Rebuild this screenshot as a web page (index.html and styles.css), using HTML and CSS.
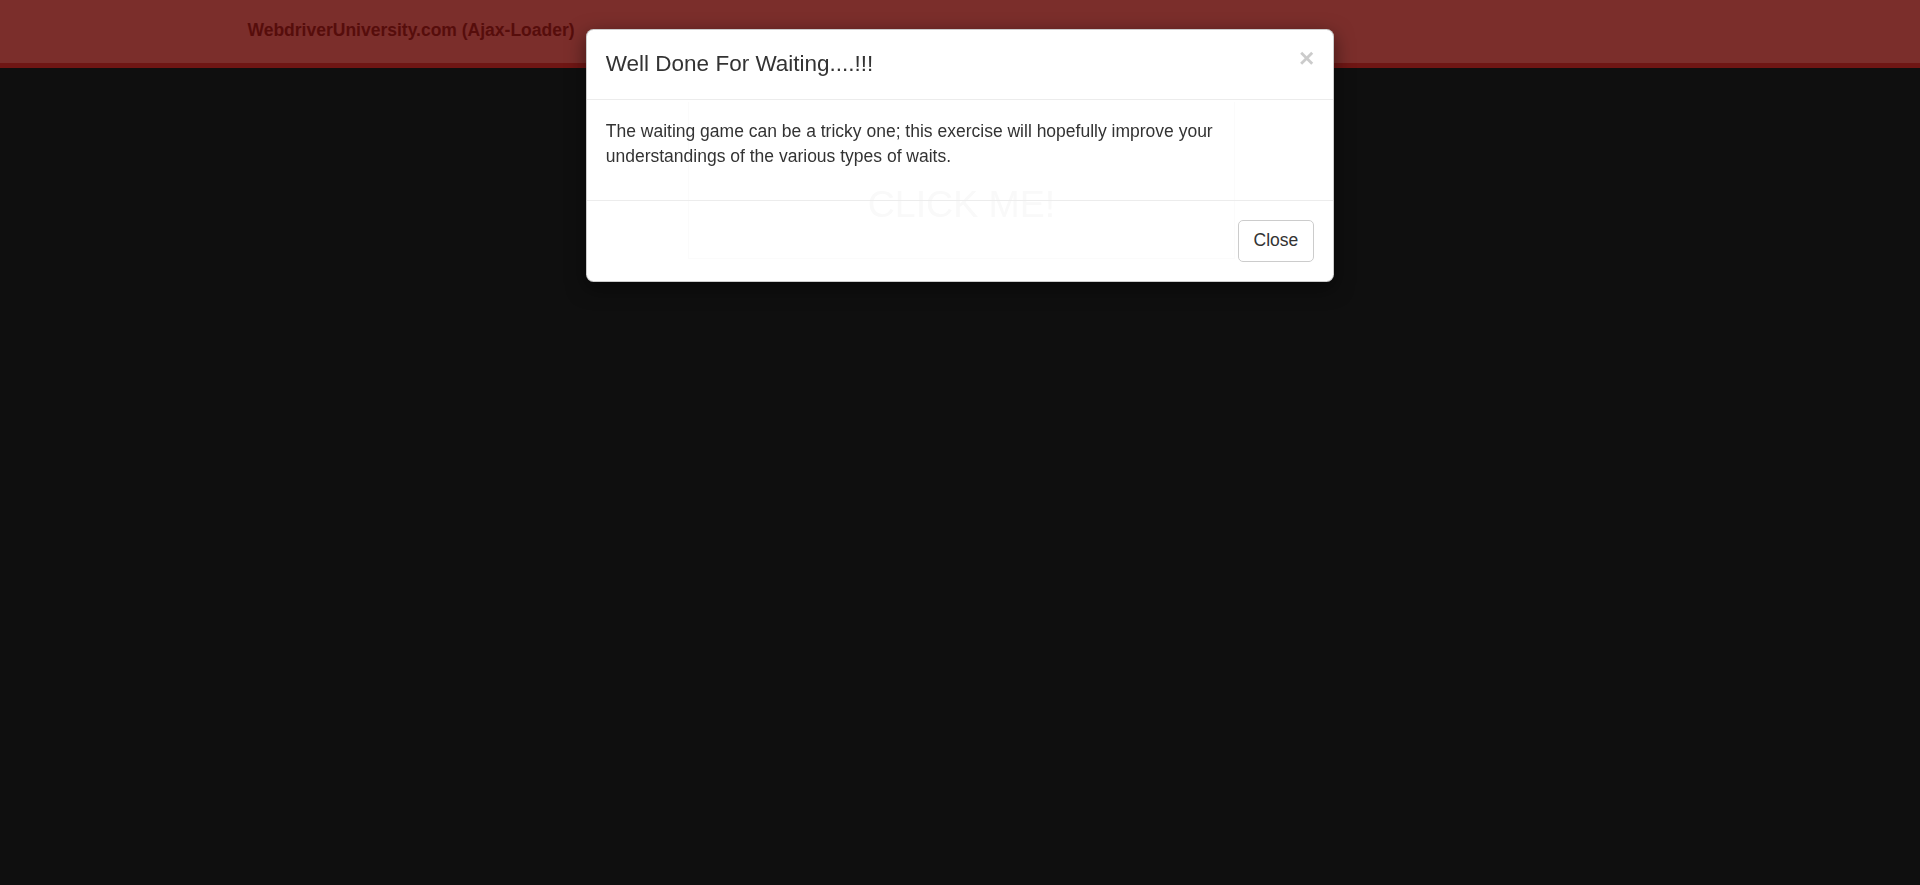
FILE: index.html
```html
<!DOCTYPE html>
<html lang="en">
<head>
<meta charset="utf-8">
<title>WebdriverUniversity.com (Ajax-Loader)</title>
<link rel="stylesheet" href="styles.css">
</head>
<body>
  <nav class="navbar">
    <div class="container">
      <a class="brand" href="#">WebdriverUniversity.com (Ajax-Loader)</a>
    </div>
  </nav>

  <div class="modal" role="dialog">
    <div class="ghost">
      <span class="ghost-text">CLICK ME!</span>
    </div>
    <div class="modal-header">
      <button class="close" type="button">&times;</button>
      <h4 class="modal-title">Well Done For Waiting....!!!</h4>
    </div>
    <div class="modal-body">
      <p>The waiting game can be a tricky one; this exercise will hopefully improve your understandings of the various types of waits.</p>
    </div>
    <div class="modal-footer">
      <button class="btn" type="button">Close</button>
    </div>
  </div>
</body>
</html>
```

FILE: styles.css
```css
* { box-sizing: border-box; }

html, body {
  margin: 0;
  padding: 0;
  height: 100%;
}

body {
  background: #0f0f0f;
  font-family: "Liberation Sans", Arial, Helvetica, sans-serif;
  font-size: 17.5px;
  line-height: 1.42857;
  color: #333;
}

.navbar {
  height: 67.5px;
  background: #7b2e2b;
  border-bottom: 5px solid #6f1614;
}

.container {
  width: 1462.5px;
  margin: 0 auto;
  padding: 0 18.75px;
  height: 100%;
  display: flex;
  align-items: center;
}

.brand {
  font-weight: bold;
  font-size: 17.5px;
  color: #560d0b;
  text-decoration: none;
  margin-top: -1px;
}

.modal {
  position: fixed;
  top: 28.5px;
  left: 50%;
  width: 748px;
  margin-left: -374px;
  background: #fff;
  border: 1px solid rgba(0, 0, 0, 0.2);
  border-radius: 7.5px;
  box-shadow: 0 6px 19px rgba(0, 0, 0, 0.5);
  overflow: hidden;
}

.ghost {
  position: absolute;
  left: 101px;
  top: 72px;
  width: 547px;
  height: 157px;
  border: 1px solid #fbfbfb;
  border-top: 0;
  display: flex;
  align-items: flex-end;
  justify-content: center;
  padding-bottom: 34px;
}

.ghost-text {
  font-size: 37.5px;
  line-height: 1;
  color: #f9f9f9;
}

.modal-header {
  position: relative;
  padding: 18px 18.75px 19.5px;
  border-bottom: 1px solid #ececec;
}

.modal-title {
  margin: 0;
  font-size: 22.5px;
  font-weight: 500;
  line-height: 1.42857;
  color: #333;
}

.close {
  float: right;
  margin-top: -2.5px;
  padding: 0;
  border: 0;
  background: transparent;
  font-family: "Liberation Sans", Arial, sans-serif;
  font-size: 26.25px;
  font-weight: bold;
  line-height: 1;
  color: #000;
  opacity: 0.2;
  text-shadow: 0 1px 0 #fff;
  cursor: pointer;
}

.modal-body {
  position: relative;
  padding: 18.75px;
}

.modal-body p {
  margin: 0 0 12.5px;
}

.modal-footer {
  position: relative;
  padding: 18.75px;
  border-top: 1px solid #ececec;
  text-align: right;
}

.btn {
  display: inline-block;
  padding: 7.5px 15px;
  font-family: "Liberation Sans", Arial, sans-serif;
  font-size: 17.5px;
  line-height: 1.42857;
  color: #333;
  background: #fff;
  border: 1px solid #ccc;
  border-radius: 5px;
  cursor: pointer;
}
```
